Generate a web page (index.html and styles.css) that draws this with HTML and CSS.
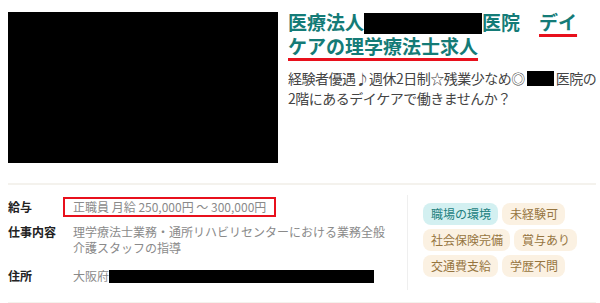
FILE: index.html
```html
<!DOCTYPE html>
<html lang="ja">
<head>
<meta charset="utf-8">
<link rel="stylesheet" href="styles.css">
</head>
<body>
<div class="card">
  <div class="top">
    <div class="photo"></div>
    <div class="intro">
      <h1 class="title">医療法人<span class="mask mask-title"></span>医院　<span class="mark">デイ</span><br><span class="mark">ケアの理学療法士求人</span></h1>
      <p class="desc">経験者優遇♪週休2日制☆残業少なめ◎<span class="mask mask-desc"></span>医院の<br>2階にあるデイケアで働きませんか？</p>
    </div>
  </div>
  <div class="details">
    <dl class="info">
      <div class="row row-salary">
        <dt>給与</dt>
        <dd><span class="boxed">正職員 月給 250,000円 ～ 300,000円</span></dd>
      </div>
      <div class="row row-job">
        <dt>仕事内容</dt>
        <dd>理学療法士業務・通所リハビリセンターにおける業務全般<br>介護スタッフの指導</dd>
      </div>
      <div class="row row-addr">
        <dt>住所</dt>
        <dd>大阪府<span class="mask mask-addr"></span></dd>
      </div>
    </dl>
    <ul class="tags">
      <li class="tag tag-env">職場の環境</li>
      <li class="tag">未経験可</li>
      <li class="tag">社会保険完備</li>
      <li class="tag">賞与あり</li>
      <li class="tag">交通費支給</li>
      <li class="tag">学歴不問</li>
    </ul>
  </div>
</div>
</body>
</html>
```
FILE: styles.css
```css
* { box-sizing: border-box; }
html, body { margin: 0; padding: 0; background: #fff; }
body {
  font-family: "Noto Sans CJK JP", "Noto Sans", sans-serif;
  color: #444;
}
.card {
  width: 588px;
  margin-left: 8px;
}
.top {
  display: flex;
  gap: 10px;
  padding-top: 12px;
  padding-bottom: 20px;
  border-bottom: 2px solid #f4f2ed;
}
.photo {
  width: 270px;
  height: 151px;
  background: #000;
  flex: none;
}
.intro {
  flex: 1;
  margin-top: -2px;
}
.title {
  margin: 0;
  font-size: 19px;
  line-height: 24px;
  font-weight: 700;
  color: #147b77;
}
.mark {
  text-decoration: underline;
  text-decoration-color: #e8101c;
  text-decoration-thickness: 3px;
  text-underline-offset: 4px;
}
.mask {
  display: inline-block;
  background: #000;
}
.mask-title {
  width: 118px;
  height: 21px;
  vertical-align: -4px;
}
.desc {
  margin: 10px -6px 0 0;
  font-size: 14px;
  line-height: 20px;
  letter-spacing: -0.5px;
  white-space: nowrap;
  color: #444;
}
.mask-desc {
  width: 27px;
  height: 15px;
  vertical-align: -2px;
  margin: 0 2px;
}
.details {
  display: flex;
  padding: 10px 0 12px;
  border-bottom: 2px solid #f4f2ed;
}
.info {
  margin: 0;
  width: 400px;
  padding-top: 2px;
  border-right: 1px solid #efefef;
}
.row {
  display: flex;
  font-size: 12px;
  line-height: 16px;
}
.row dt {
  width: 65px;
  flex: none;
  font-weight: 700;
  color: #222;
}
.row dd {
  margin: 0;
  color: #8a8a8a;
}
.row-salary { align-items: center; }
.boxed {
  display: inline-block;
  border: 2px solid #e8101c;
  margin-left: -10px;
  padding: 0 8px;
}
.row-job { margin-top: 7px; }
.row-addr { margin-top: 12px; padding-bottom: 6px; }
.mask-addr {
  width: 265px;
  height: 13px;
  vertical-align: -2px;
}
.tags {
  list-style: none;
  margin: 0;
  padding: 8px 0 0 15px;
  display: flex;
  flex-wrap: wrap;
  align-content: flex-start;
  gap: 4px;
  width: 180px;
}
.tag {
  font-size: 12px;
  line-height: 22px;
  padding: 0 7px 0 8px;
  border-radius: 8px;
  background: #fbf1e2;
  color: #96753f;
}
.tag-env {
  background: #d3f0f1;
  color: #22807e;
}
```
